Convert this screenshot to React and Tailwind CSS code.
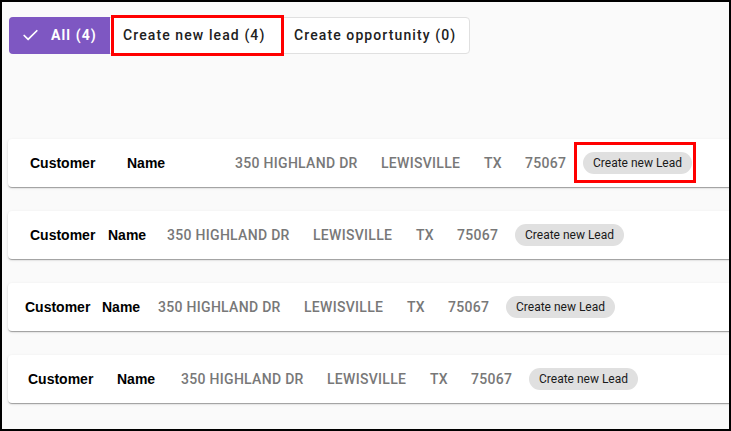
import { Check } from 'lucide-react';

const rows = [
  { pad: 'pl-[22px]', cust: 'w-[97px]', name: 'w-[108px]', marked: true },
  { pad: 'pl-[22px]', cust: 'w-[78px]', name: 'w-[59px]' },
  { pad: 'pl-[17px]', cust: 'w-[77px]', name: 'w-[56px]' },
  { pad: 'pl-[20px]', cust: 'w-[89px]', name: 'w-[64px]' },
];

function Tabs() {
  return (
    <div className="flex h-[37px] w-[461px] rounded-[4px] border border-[#e0e0e0] bg-white font-['Roboto',sans-serif] text-[14px] font-medium tracking-[1.1px] text-[#212121]">
      <button className="-my-px -ml-px flex w-[101px] items-center rounded-l-[4px] bg-[#7e57c2] pl-[12px] text-white">
        <Check size={19} strokeWidth={2.2} className="text-white" />
        <span className="ml-[11px] font-bold">All (4)</span>
      </button>
      <button className="relative flex w-[174px] items-center pl-[13px]">
        Create new lead (4)
        <span className="pointer-events-none absolute -top-[3px] -bottom-[3px] left-px right-0 border-[3px] border-[#f00]" />
      </button>
      <button className="flex flex-1 items-center pl-[10px]">Create opportunity (0)</button>
    </div>
  );
}

function LeadRow({ pad, cust, name, marked }) {
  const addr = "font-['Roboto',sans-serif] text-[14px] font-medium tracking-[0.3px] text-[#787878]";
  return (
    <div className={`-mr-[8px] flex h-[48px] items-center rounded-[4px] bg-white ${pad} shadow-[0px_2px_1px_-1px_rgba(0,0,0,0.2),0px_1px_1px_0px_rgba(0,0,0,0.14),0px_1px_3px_0px_rgba(0,0,0,0.12)]`}>
      <span className={`${cust} font-['Liberation_Sans',Arial,sans-serif] text-[14px] font-bold text-black`}>Customer</span>
      <span className={`${name} font-['Liberation_Sans',Arial,sans-serif] text-[14px] font-bold text-black`}>Name</span>
      <span className={`w-[146px] ${addr}`}>350 HIGHLAND DR</span>
      <span className={`w-[103px] ${addr}`}>LEWISVILLE</span>
      <span className={`w-[41px] ${addr}`}>TX</span>
      <span className={`w-[58px] ${addr}`}>75067</span>
      <span className="relative flex h-[22px] items-center rounded-full bg-[#e0e0e0] px-[10px] font-['Roboto',sans-serif] text-[12px] text-[#1a1a1a]">
        Create new Lead
        {marked && (
          <span className="pointer-events-none absolute -top-[10px] -bottom-[9px] -left-[9px] -right-[4px] border-[3px] border-[#f00]" />
        )}
      </span>
    </div>
  );
}

export default function App() {
  return (
    <div className="h-[431px] w-[731px] overflow-hidden border-2 border-black bg-[#fafafa]">
      <div className="pl-[7px] pt-[15px]">
        <Tabs />
      </div>
      <div className="ml-[6px] mt-[85px] flex flex-col gap-[24px]">
        {rows.map((r, i) => (
          <LeadRow key={i} {...r} />
        ))}
      </div>
    </div>
  );
}
